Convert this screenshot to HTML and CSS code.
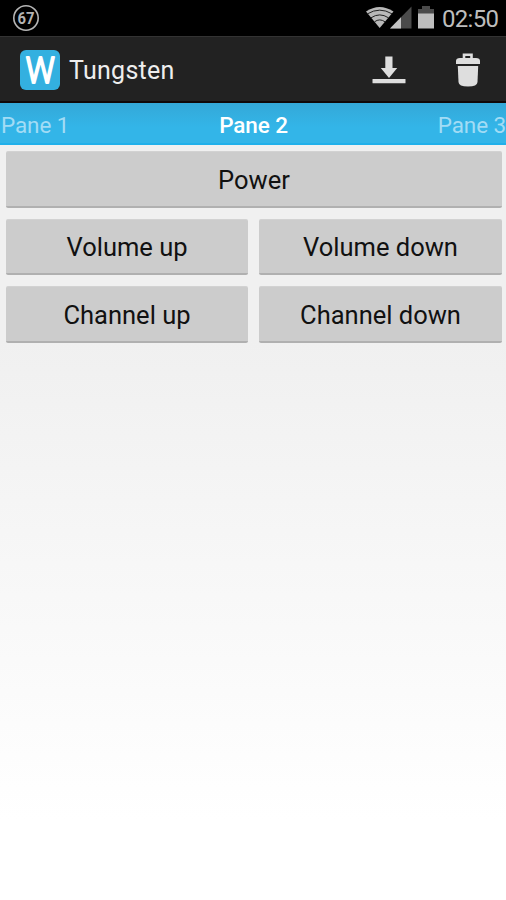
FILE: index.html
```html
<!DOCTYPE html>
<html lang="en">
<head>
    <meta charset="UTF-8">
    <meta name="viewport" content="width=device-width, initial-scale=1.0">
    <title>Tungsten</title>
    <link rel="stylesheet" href="styles.css">
</head>
<body>
    <div class="status-bar">
        <svg class="badge" width="28" height="28" viewBox="0 0 28 28">
            <circle cx="14" cy="14" r="12.2" fill="none" stroke="#b4b4b4" stroke-width="1.6"/>
            <text class="badge-text" x="14" y="19.500" text-anchor="middle" textLength="17" lengthAdjust="spacingAndGlyphs">67</text>
        </svg>
        <div class="status-icons">
            <svg width="76" height="36" viewBox="0 0 76 36">
                <!-- wifi -->
                <path d="M0 11.500Q13.500 2.500 27.500 11.500L13.700 28Z" fill="#b9b9b9"/>
                <path d="M1.500 13.800Q13.700 6.500 26 13.800M5 17.800Q13.700 12 22.500 17.800M8.500 21.800Q13.700 18 19 21.800" fill="none" stroke="#222" stroke-width="1"/>
                <!-- signal -->
                <path d="M45.500 6.500V28.500H24Z" fill="#4b4b4b"/>
                <path d="M35 17.300V28.500H24Z" fill="#c4c4c4"/>
                <!-- battery -->
                <path d="M56 6h8v3h4v5h-16v-5h4z" fill="#4b4b4b"/>
                <rect x="52" y="13.500" width="16" height="15" fill="#bebebe"/>
            </svg>
            <span class="clock">02:50</span>
        </div>
    </div>

    <div class="action-bar">
        <svg class="logo" width="40" height="40" viewBox="0 0 40 40">
            <rect width="40" height="40" rx="6" fill="#33b0e0"/>
            <text class="logo-text" x="20.300" y="32.500" text-anchor="middle" textLength="29" lengthAdjust="spacingAndGlyphs">W</text>
        </svg>
        <h1 class="title">Tungsten</h1>
        <div class="actions">
            <svg width="34" height="40" viewBox="0 0 34 40">
                <path d="M13.300 6.500h7.200v11.500h4.700L17 28L8.800 18h4.500z" fill="#dedede"/>
                <rect x="0.500" y="29" width="33" height="4.200" rx="0.500" fill="#dedede"/>
            </svg>
            <svg width="26" height="40" viewBox="0 0 26 40">
                <path d="M9 8V4.800h7.500V8" fill="none" stroke="#dedede" stroke-width="2.600"/>
                <path d="M1 14V11Q1 8 5 8H21Q25 8 25 11V14Z" fill="#dedede"/>
                <path d="M2.800 16H23.200L22.500 32Q22.300 36.500 13 36.500Q3.700 36.500 3.500 32Z" fill="#dedede"/>
            </svg>
        </div>
    </div>

    <div class="tabs">
        <span class="tab">Pane 1</span>
        <span class="tab active">Pane 2</span>
        <span class="tab">Pane 3</span>
    </div>

    <div class="buttons">
        <button class="btn wide">Power</button>
        <button class="btn">Volume up</button>
        <button class="btn">Volume down</button>
        <button class="btn">Channel up</button>
        <button class="btn">Channel down</button>
    </div>
</body>
</html>
```
FILE: styles.css
```css
* {
    box-sizing: border-box;
}
body {
    margin: 0;
    height: 900px;
    overflow: hidden;
    font-family: Roboto, sans-serif;
    background: linear-gradient(#f0f0f0 0, #f0f0f0 340px, #ffffff 820px);
}
svg {
    display: block;
    overflow: visible;
}
.status-bar {
    height: 36px;
    padding: 0 8px 0 12px;
    display: flex;
    justify-content: space-between;
    align-items: center;
    background-color: #000;
}
.badge-text {
    font-size: 16px;
    font-weight: bold;
    fill: #b4b4b4;
}
.status-icons {
    display: flex;
    align-items: center;
}
.clock {
    width: 56px;
    font-size: 24px;
    line-height: 36px;
    letter-spacing: -0.7px;
    white-space: nowrap;
    color: #bdbdbd;
    margin-top: 2px;
}
.action-bar {
    height: 67px;
    padding: 1px 25px 0 20px;
    display: flex;
    align-items: center;
    background-color: #222;
    border-top: 1px solid #333;
    border-bottom: 2px solid #100808;
}
.logo-text {
    font-size: 37px;
    font-weight: 300;
    fill: #fff;
    stroke: #fff;
    stroke-width: 2.2px;
    stroke-linejoin: round;
}
.title {
    margin: 2px 0 0 9px;
    font-size: 25px;
    font-weight: normal;
    letter-spacing: 0.25px;
    color: #eee;
}
.actions {
    margin-left: auto;
    display: flex;
    gap: 49px;
}
.tabs {
    height: 42px;
    padding: 3px 0 0 1px;
    display: flex;
    justify-content: space-between;
    align-items: center;
    background: linear-gradient(#34a8d8, #33b5e8 60%);
    border-bottom: 2px solid #20b0ea;
}
.tab {
    font-size: 22.5px;
    letter-spacing: -0.1px;
    color: #a2dcf5;
}
.tab.active {
    font-weight: 500;
    color: #fff;
}
.buttons {
    padding: 6px 4px 0 6px;
    display: grid;
    grid-template-columns: 242px 243px;
    gap: 11px;
}
.btn {
    height: 56.5px;
    padding: 2px 0 0;
    border: none;
    border-top: 1px solid #d2d2d2;
    border-bottom: 2px solid #b0b0b0;
    border-radius: 2px;
    background-color: #ccc;
    font-family: inherit;
    font-size: 25.5px;
    letter-spacing: 0;
    color: #111;
}
.wide {
    grid-column: span 2;
}
```
